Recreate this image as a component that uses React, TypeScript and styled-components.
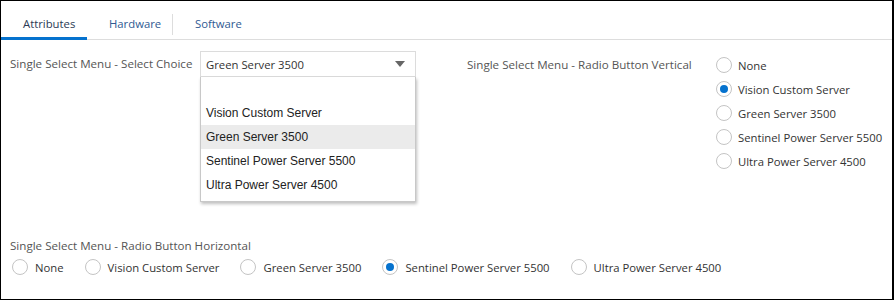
import React from 'react';
import styled, { createGlobalStyle } from 'styled-components';

const GlobalStyle = createGlobalStyle`
    body {
        margin: 0;
        background: #fff;
    }
`;

const UI_FONT = `'Open Sans', 'Noto Sans', sans-serif`;

const StyledFrame = styled.div`
    width: 894px;
    height: 300px;
    box-sizing: border-box;
    border: 1px solid #000;
    border-right-width: 2px;
    font-family: ${UI_FONT};
    font-size: 11.3px;
    color: #555;
    overflow: hidden;
`;

const TabBar = styled.div`
    display: flex;
    height: 38px;
    border-bottom: 1px solid #ddd;
`;

const Tab = styled.div<{ $active?: boolean }>`
    position: relative;
    width: 86px;
    height: 39px;
    box-sizing: border-box;
    padding: 8px 0 0 22px;
    display: flex;
    align-items: center;
    color: ${(p) => (p.$active ? '#2b3a55' : '#2f5a92')};
    border-bottom: 3px solid ${(p) => (p.$active ? '#0572ce' : 'transparent')};

    & + &::before {
        content: '';
        position: absolute;
        left: -1px;
        top: 13px;
        height: 21px;
        border-left: 1px solid #ddd;
    }
`;

const Content = styled.div`
    padding: 11px 9px 0;
`;

const TopRow = styled.div`
    display: flex;
    align-items: flex-start;
`;

const FieldLabel = styled.label`
    font-size: 11.6px;
    color: #555;
    white-space: nowrap;
`;

const Field = styled.div<{ $labelWidth: number; $offset?: number }>`
    display: flex;
    align-items: flex-start;
    margin-left: ${(p) => p.$offset ?? 0}px;
    padding-top: ${(p) => (p.$offset ? 2 : 0)}px;

    & > ${FieldLabel} {
        width: ${(p) => p.$labelWidth}px;
        flex: none;
        line-height: ${(p) => (p.$offset ? 24 : 26)}px;
    }
`;

const SelectWrap = styled.div`
    position: relative;
    width: 216px;
`;

const SelectBox = styled.div`
    height: 26px;
    box-sizing: border-box;
    border: 1px solid #dcdcdc;
    display: flex;
    align-items: center;
    justify-content: space-between;
    padding: 0 10px 0 5px;
    color: #333;
`;

const Caret = styled.span`
    width: 0;
    height: 0;
    border-left: 5px solid transparent;
    border-right: 5px solid transparent;
    border-top: 6px solid #666;
`;

const Dropdown = styled.ul`
    position: absolute;
    left: 0;
    top: 26px;
    width: 216px;
    box-sizing: border-box;
    margin: 0;
    padding: 0 0 4px;
    list-style: none;
    background: #fff;
    border: 1px solid #c8c8c8;
    border-top: none;
    box-shadow: 1px 2px 3px rgba(0, 0, 0, 0.25);
    font-family: 'Liberation Sans', Arial, sans-serif;
    font-size: 12px;
    color: #222;
    z-index: 5;
`;

const Option = styled.li<{ $hover?: boolean }>`
    height: 24px;
    line-height: 24px;
    padding-left: 5px;
    background: ${(p) => (p.$hover ? '#ebebeb' : 'transparent')};
`;

const RadioGroup = styled.div<{ $horizontal?: boolean }>`
    display: flex;
    flex-direction: ${(p) => (p.$horizontal ? 'row' : 'column')};
    gap: ${(p) => (p.$horizontal ? '21px' : '0')};
    padding-left: ${(p) => (p.$horizontal ? 2 : 0)}px;

    & > label {
        gap: ${(p) => (p.$horizontal ? 7 : 6)}px;
    }
`;

const RadioItem = styled.label`
    display: flex;
    align-items: center;
    height: 24px;
    font-size: 11.3px;
    color: #333;
    white-space: nowrap;
`;

const Circle = styled.span<{ $checked?: boolean }>`
    width: 16px;
    height: 16px;
    flex: none;
    box-sizing: border-box;
    border-radius: 50%;
    border: 1px solid #c4c4c4;
    background: #fff;
    display: flex;
    align-items: center;
    justify-content: center;

    &::after {
        content: '';
        width: 8px;
        height: 8px;
        border-radius: 50%;
        background: ${(p) => (p.$checked ? '#0572ce' : 'transparent')};
    }
`;

const Section = styled.div`
    margin-top: 64px;

    & > ${FieldLabel} {
        display: block;
        line-height: 17px;
        margin-bottom: 1px;
    }
`;

const servers = ['None', 'Vision Custom Server', 'Green Server 3500', 'Sentinel Power Server 5500', 'Ultra Power Server 4500'];

const Radios = ({ checked, horizontal }: { checked: string; horizontal?: boolean }) => (
    <RadioGroup $horizontal={horizontal}>
        {servers.map((s) => (
            <RadioItem key={s}>
                <Circle $checked={s === checked} />
                {s}
            </RadioItem>
        ))}
    </RadioGroup>
);

export default function App() {
    return (
        <StyledFrame>
            <GlobalStyle />
            <TabBar>
                <Tab $active>Attributes</Tab>
                <Tab>Hardware</Tab>
                <Tab>Software</Tab>
            </TabBar>
            <Content>
                <TopRow>
                    <Field $labelWidth={190}>
                        <FieldLabel>Single Select Menu - Select Choice</FieldLabel>
                        <SelectWrap>
                            <SelectBox>
                                Green Server 3500
                                <Caret />
                            </SelectBox>
                            <Dropdown>
                                <Option>&nbsp;</Option>
                                <Option>Vision Custom Server</Option>
                                <Option $hover>Green Server 3500</Option>
                                <Option>Sentinel Power Server 5500</Option>
                                <Option>Ultra Power Server 4500</Option>
                            </Dropdown>
                        </SelectWrap>
                    </Field>
                    <Field $labelWidth={249} $offset={51}>
                        <FieldLabel>Single Select Menu - Radio Button Vertical</FieldLabel>
                        <Radios checked="Vision Custom Server" />
                    </Field>
                </TopRow>
                <Section>
                    <FieldLabel>Single Select Menu - Radio Button Horizontal</FieldLabel>
                    <Radios checked="Sentinel Power Server 5500" horizontal />
                </Section>
            </Content>
        </StyledFrame>
    );
}
